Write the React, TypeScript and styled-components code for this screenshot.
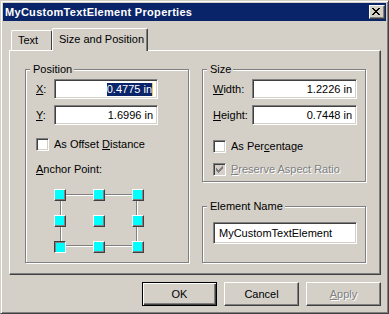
import React from "react";
import styled, { createGlobalStyle } from "styled-components";

const face = "#D4D0C8";
const shadow = "#808080";
const dark = "#404040";
const navy = "#0A246A";

const GlobalStyle = createGlobalStyle`
  html, body {
    margin: 0;
    padding: 0;
    background: ${face};
  }
  body {
    font-family: "Liberation Sans", Arial, sans-serif;
    font-size: 11px;
    color: #000;
  }
`;

const Window = styled.div`
  width: 389px;
  height: 314px;
  box-sizing: border-box;
  border: 1px solid;
  border-color: ${face} ${dark} ${dark} ${face};
  box-shadow: inset 1px 1px #fff, inset -1px -1px ${shadow};
  padding: 2px;
  background: ${face};
  display: flex;
  flex-direction: column;
`;

const TitleBar = styled.div`
  height: 18px;
  flex: none;
  background: ${navy};
  display: flex;
  align-items: center;
  justify-content: space-between;
  padding: 0 1px 0 2px;
`;

const Title = styled.span`
  color: #fff;
  font-weight: bold;
  font-size: 11px;
  letter-spacing: 0.3px;
`;

const CloseButton = styled.div`
  width: 16px;
  height: 14px;
  box-sizing: border-box;
  background: ${face};
  border: 1px solid;
  border-color: #fff ${dark} ${dark} #fff;
  box-shadow: inset -1px -1px ${shadow};
  display: flex;

  svg {
    display: block;
  }
`;

const Content = styled.div`
  padding: 7px 5px 0 6px;
  display: flex;
  flex-direction: column;
`;

const TabStrip = styled.div`
  display: flex;
  align-items: flex-end;
  height: 23px;
  margin-bottom: -1px;
  padding-left: 2px;
  position: relative;
  z-index: 1;
`;

const Tab = styled.div<{ $active?: boolean; $width: number }>`
  width: ${(p) => p.$width}px;
  height: ${(p) => (p.$active ? 23 : 20)}px;
  margin-bottom: ${(p) => (p.$active ? 0 : 1)}px;
  box-sizing: border-box;
  background: ${face};
  border-top: 1px solid #fff;
  border-left: 1px solid #fff;
  border-right: 1px solid ${dark};
  box-shadow: ${(p) => (p.$active ? `inset -1px 0 ${shadow}` : "none")};
  border-radius: 2px 2px 0 0;
  padding: ${(p) => (p.$active ? "4px 0 0 6px" : "3px 0 0 6px")};
  line-height: 13px;
  white-space: nowrap;
`;

const Panel = styled.div`
  height: 225px;
  box-sizing: border-box;
  border: 1px solid;
  border-color: #fff ${dark} ${dark} #fff;
  box-shadow: inset -1px -1px ${shadow};
  padding: 18px 0 0 15px;
  display: flex;
  gap: 13px;
`;

const Column = styled.div`
  width: 164px;
  display: flex;
  flex-direction: column;
  gap: 24px;
`;

const Group = styled.div<{ $height: number }>`
  height: ${(p) => p.$height}px;
  box-sizing: border-box;
  border: 1px solid ${shadow};
  box-shadow: inset 1px 1px #fff, 1px 1px #fff;
  padding-left: 10px;
  display: flex;
  flex-direction: column;
  align-items: flex-start;
`;

const Legend = styled.div`
  margin: -7px 0 0 -6px;
  padding: 0 2px 0 3px;
  line-height: 13px;
  background: ${face};
`;

const FieldRow = styled.div<{ $top: number }>`
  display: flex;
  align-items: center;
  margin-top: ${(p) => p.$top}px;
`;

const FieldLabel = styled.span<{ $width: number }>`
  width: ${(p) => p.$width}px;
  line-height: 13px;
`;

const TextBox = styled.div<{ $width: number; $height?: number; $left?: boolean }>`
  width: ${(p) => p.$width}px;
  height: ${(p) => p.$height ?? 20}px;
  box-sizing: border-box;
  background: #fff;
  border: 1px solid;
  border-color: ${shadow} #fff #fff ${shadow};
  box-shadow: inset 1px 1px ${dark}, inset -1px -1px ${face};
  display: flex;
  align-items: center;
  justify-content: ${(p) => (p.$left ? "flex-start" : "flex-end")};
  padding: ${(p) => (p.$left ? "0 0 0 5px" : "0 4px 0 0")};
  line-height: 13px;
  white-space: nowrap;
`;

const Selection = styled.span`
  background: ${navy};
  color: #fff;
`;

const Caret = styled.span`
  width: 1px;
  height: 13px;
  background: #f0c860;
`;

const CheckRow = styled.div<{ $top: number; $disabled?: boolean }>`
  display: flex;
  align-items: center;
  gap: 5px;
  margin-top: ${(p) => p.$top}px;
  line-height: 13px;
  color: ${(p) => (p.$disabled ? shadow : "#000")};
  text-shadow: ${(p) => (p.$disabled ? "1px 1px #fff" : "none")};
`;

const CheckBox = styled.div<{ $disabled?: boolean }>`
  width: 13px;
  height: 13px;
  box-sizing: border-box;
  background: ${(p) => (p.$disabled ? face : "#fff")};
  border: 1px solid;
  border-color: ${shadow} #fff #fff ${shadow};
  box-shadow: inset 1px 1px ${dark}, inset -1px -1px ${face};

  svg {
    display: block;
    margin: 1px;
  }
`;

const PlainLabel = styled.div<{ $top: number }>`
  margin-top: ${(p) => p.$top}px;
  line-height: 13px;
`;

const AnchorGrid = styled.div`
  position: relative;
  display: grid;
  grid-template-columns: repeat(3, 12px);
  grid-auto-rows: 12px;
  column-gap: 27px;
  row-gap: 14px;
  margin: 13px 0 0 18px;

  &::before {
    content: "";
    position: absolute;
    left: 6px;
    top: 5px;
    right: 7px;
    bottom: 7px;
    border: 1px solid ${shadow};
    box-shadow: inset 1px 1px #fff, 1px 1px #fff;
  }
`;

const AnchorCell = styled.div<{ $pressed?: boolean }>`
  position: relative;
  box-sizing: border-box;
  background: #00ffff;
  border: 1px solid;
  border-color: ${(p) =>
    p.$pressed ? `${dark} #fff #fff ${dark}` : `#fff ${dark} ${dark} #fff`};
  box-shadow: ${(p) =>
    p.$pressed ? `inset 1px 1px ${shadow}` : `inset -1px -1px ${shadow}`};
`;

const ButtonRow = styled.div`
  display: flex;
  justify-content: flex-end;
  gap: 7px;
  margin-top: 7px;
`;

const Button = styled.div<{ $default?: boolean; $disabled?: boolean }>`
  width: 75px;
  height: 24px;
  box-sizing: border-box;
  display: flex;
  align-items: center;
  justify-content: center;
  border: 1px solid;
  border-color: ${(p) => (p.$default ? "#000" : `#fff ${dark} ${dark} #fff`)};
  box-shadow: ${(p) =>
    p.$default
      ? `inset 1px 1px #fff, inset -1px -1px ${dark}, inset -2px -2px ${shadow}`
      : `inset -1px -1px ${shadow}`};
  color: ${(p) => (p.$disabled ? shadow : "#000")};
  text-shadow: ${(p) => (p.$disabled ? "1px 1px #fff" : "none")};
  line-height: 13px;
`;

const closeGlyph = [
  "XX....XX",
  ".XX..XX.",
  "..XXXX..",
  "...XX...",
  "..XXXX..",
  ".XX..XX.",
  "XX....XX",
];

const checkCols = [5, 6, 7, 6, 5, 4, 3];

function CloseIcon() {
  return (
    <svg width="14" height="12" viewBox="0 0 14 12" shapeRendering="crispEdges">
      {closeGlyph.map((row, y) =>
        row.split("").map((c, x) =>
          c === "X" ? <rect key={`${x}-${y}`} x={x + 2} y={y + 2} width="1" height="1" fill="#000" /> : null
        )
      )}
    </svg>
  );
}

function CheckIcon({ color }: { color: string }) {
  return (
    <svg width="9" height="9" viewBox="0 0 9 9" shapeRendering="crispEdges">
      {checkCols.map((top, i) => (
        <rect key={i} x={i + 1} y={top - 2} width="1" height="3" fill={color} />
      ))}
    </svg>
  );
}

export default function App() {
  const cells = [false, false, false, false, false, false, true, false, false];
  return (
    <>
      <GlobalStyle />
      <Window>
        <TitleBar>
          <Title>MyCustomTextElement Properties</Title>
          <CloseButton>
            <CloseIcon />
          </CloseButton>
        </TitleBar>
        <Content>
          <TabStrip>
            <Tab $width={41}>Text</Tab>
            <Tab $active $width={96}>Size and Position</Tab>
          </TabStrip>
          <Panel>
            <Column>
              <Group $height={194}>
                <Legend>Position</Legend>
                <FieldRow $top={3}>
                  <FieldLabel $width={18}>
                    <u>X</u>:
                  </FieldLabel>
                  <TextBox $width={104}>
                    <Selection>0.4775 in</Selection>
                    <Caret />
                  </TextBox>
                </FieldRow>
                <FieldRow $top={6}>
                  <FieldLabel $width={18}>
                    <u>Y</u>:
                  </FieldLabel>
                  <TextBox $width={104}>1.6996 in</TextBox>
                </FieldRow>
                <CheckRow $top={13}>
                  <CheckBox />
                  <span>
                    As Offset <u>D</u>istance
                  </span>
                </CheckRow>
                <PlainLabel $top={12}>
                  <u>A</u>nchor Point:
                </PlainLabel>
                <AnchorGrid>
                  {cells.map((pressed, i) => (
                    <AnchorCell key={i} $pressed={pressed} />
                  ))}
                </AnchorGrid>
              </Group>
            </Column>
            <Column>
              <Group $height={113}>
                <Legend>Size</Legend>
                <FieldRow $top={3}>
                  <FieldLabel $width={39}>
                    <u>W</u>idth:
                  </FieldLabel>
                  <TextBox $width={105}>1.2226 in</TextBox>
                </FieldRow>
                <FieldRow $top={6}>
                  <FieldLabel $width={39}>
                    <u>H</u>eight:
                  </FieldLabel>
                  <TextBox $width={105}>0.7448 in</TextBox>
                </FieldRow>
                <CheckRow $top={15}>
                  <CheckBox />
                  <span>
                    As Per<u>c</u>entage
                  </span>
                </CheckRow>
                <CheckRow $top={10} $disabled>
                  <CheckBox $disabled>
                    <CheckIcon color={shadow} />
                  </CheckBox>
                  <span>
                    <u>P</u>reserve Aspect Ratio
                  </span>
                </CheckRow>
              </Group>
              <Group $height={57}>
                <Legend>Element Name</Legend>
                <FieldRow $top={9}>
                  <TextBox $width={144} $height={22} $left>
                    MyCustomTextElement
                  </TextBox>
                </FieldRow>
              </Group>
            </Column>
          </Panel>
          <ButtonRow>
            <Button $default>OK</Button>
            <Button>Cancel</Button>
            <Button $disabled>
              <span>
                <u>A</u>pply
              </span>
            </Button>
          </ButtonRow>
        </Content>
      </Window>
    </>
  );
}
